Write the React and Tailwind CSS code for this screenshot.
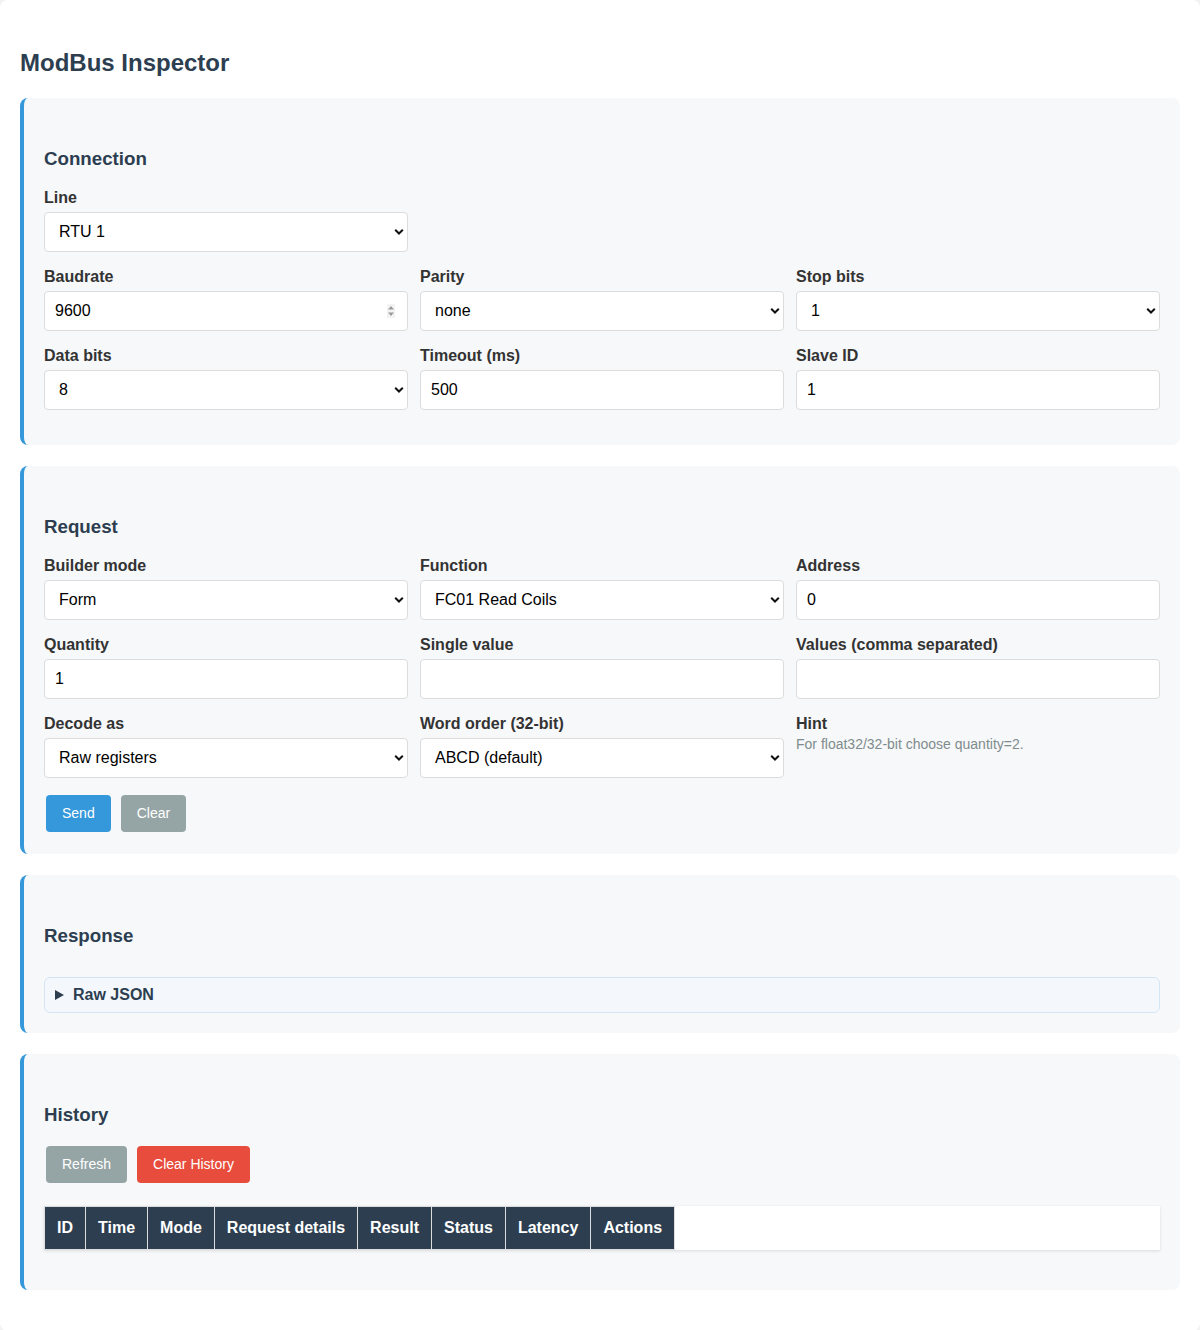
import React from "react";

const font = { fontFamily: '"Liberation Sans", Arial, sans-serif' };

function Chevron() {
  return (
    <svg className="absolute right-[4px] top-1/2 -translate-y-1/2 pointer-events-none" width="10" height="7" viewBox="0 0 10 7">
      <path d="M1.2 1.2 L5 5 L8.8 1.2" fill="none" stroke="#111" strokeWidth="2" />
    </svg>
  );
}

function Select({ value }) {
  return (
    <div className="relative">
      <div className="h-10 w-full bg-white border border-[#dcdcdc] rounded-[4px] pl-[14px] flex items-center text-[16px] text-black">
        {value}
      </div>
      <Chevron />
    </div>
  );
}

function Input({ value, spinner }) {
  return (
    <div className="relative">
      <div className="h-10 w-full bg-white border border-[#dcdcdc] rounded-[4px] pl-[10px] flex items-center text-[16px] text-black">
        {value}
      </div>
      {spinner && (
        <svg className="absolute right-[13px] top-1/2 -translate-y-1/2" width="8" height="14" viewBox="0 0 8 14">
          <rect x="0" y="0" width="8" height="14" fill="#f3f3f3" />
          <path d="M1 5.5 L4 2 L7 5.5 Z" fill="#9a9a9a" />
          <path d="M1 8.5 L4 12 L7 8.5 Z" fill="#9a9a9a" />
        </svg>
      )}
    </div>
  );
}

function Field({ label, children }) {
  return (
    <div className="mb-[15px]">
      <div className="text-[16px] leading-[19px] font-bold text-[#333] mb-[5px]">{label}</div>
      {children}
    </div>
  );
}

function Card({ title, children }) {
  return (
    <div className="bg-[#f7f8fa] border-l-4 border-[#3498db] rounded-lg pl-5 pr-5 pt-[49px] pb-5 mb-[21px]">
      <h2 className="text-[18.72px] leading-6 font-bold text-[#2c3e50] mb-[17px]">{title}</h2>
      {children}
    </div>
  );
}

function Btn({ children, color }) {
  return (
    <button className={`h-[37px] px-4 m-[2px] rounded-[4px] text-white text-[14px] ${color}`}>{children}</button>
  );
}

export default function App() {
  const heads = ["ID", "Time", "Mode", "Request details", "Result", "Status", "Latency", "Actions"];
  return (
    <div className="min-h-[1330px] bg-[#f2f2f2]" style={font}>
      <div className="bg-white rounded-lg min-h-[1330px] px-5 pt-[49px] pb-5">
        <h1 className="text-[24px] leading-[28px] font-bold text-[#2c3e50] mb-[21px]">ModBus Inspector</h1>

        <Card title="Connection">
          <div className="grid grid-cols-3 gap-x-3">
            <Field label="Line"><Select value="RTU 1" /></Field>
            <div />
            <div />
            <Field label="Baudrate"><Input value="9600" spinner /></Field>
            <Field label="Parity"><Select value="none" /></Field>
            <Field label="Stop bits"><Select value="1" /></Field>
            <Field label="Data bits"><Select value="8" /></Field>
            <Field label="Timeout (ms)"><Input value="500" /></Field>
            <Field label="Slave ID"><Input value="1" /></Field>
          </div>
        </Card>

        <Card title="Request">
          <div className="grid grid-cols-3 gap-x-3">
            <Field label="Builder mode"><Select value="Form" /></Field>
            <Field label="Function"><Select value="FC01 Read Coils" /></Field>
            <Field label="Address"><Input value="0" /></Field>
            <Field label="Quantity"><Input value="1" /></Field>
            <Field label="Single value"><Input value="" /></Field>
            <Field label="Values (comma separated)"><Input value="" /></Field>
            <Field label="Decode as"><Select value="Raw registers" /></Field>
            <Field label="Word order (32-bit)"><Select value="ABCD (default)" /></Field>
            <Field label="Hint">
              <div className="text-[14px] leading-[16px] text-[#7f8c8d] -mt-[2px]">For float32/32-bit choose quantity=2.</div>
            </Field>
          </div>
          <div className="flex gap-[6px]">
            <Btn color="bg-[#3498db]">Send</Btn>
            <Btn color="bg-[#95a5a6]">Clear</Btn>
          </div>
        </Card>

        <Card title="Response">
          <div className="mt-[29px] h-[36px] border border-[#d5e5f5] bg-[#f4f8fd] rounded-[6px] flex items-center pl-[10px]">
            <svg width="9" height="10" viewBox="0 0 9 10" className="mr-[9px]">
              <path d="M0 0 L9 5 L0 10 Z" fill="#2c3e50" />
            </svg>
            <span className="text-[16px] font-bold text-[#2c3e50]">Raw JSON</span>
          </div>
        </Card>

        <Card title="History">
          <div className="flex gap-[6px]">
            <Btn color="bg-[#95a5a6]">Refresh</Btn>
            <Btn color="bg-[#e74c3c]">Clear History</Btn>
          </div>
          <div className="mt-[21px] mb-5 bg-white shadow-[0_1px_3px_rgba(0,0,0,0.12)]">
            <table className="border-collapse">
              <thead>
                <tr>
                  {heads.map((h) => (
                    <th key={h} className="h-[43px] px-3 bg-[#2c3e50] text-white text-[16px] font-bold text-left border border-[#dddddd]">
                      {h}
                    </th>
                  ))}
                </tr>
              </thead>
            </table>
          </div>
        </Card>
      </div>
    </div>
  );
}
